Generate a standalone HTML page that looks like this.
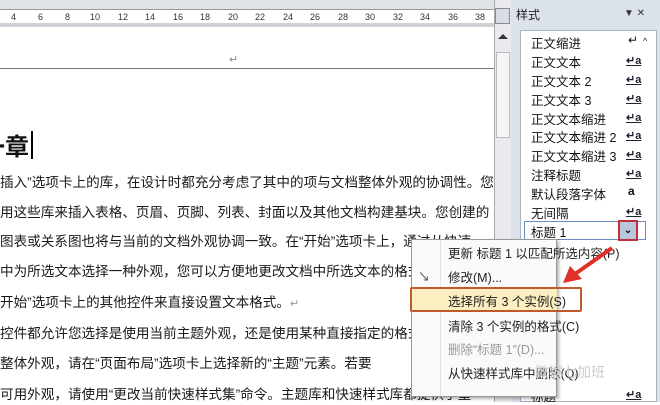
<!DOCTYPE html>
<html><head><meta charset="utf-8"><style>
*{margin:0;padding:0;box-sizing:border-box}
body{width:660px;height:402px;overflow:hidden;background:#fff;position:relative;font-family:"Liberation Sans","Noto Sans CJK SC",sans-serif;color:#111}
.abs{position:absolute}
.doc{left:0;top:0;width:494px;height:402px;overflow:hidden}
.ln{position:absolute;left:0;white-space:nowrap;font-size:13.6px;line-height:20px;color:#1a1a1a}
.rul{font-size:9px;color:#333;position:absolute;top:12px}
.it{position:absolute;left:531px;font-size:12.5px;white-space:nowrap;color:#111}
.ic{position:absolute;left:626px;font-size:11px;font-weight:bold;text-decoration:underline;color:#223}
.mi{position:absolute;left:448px;font-size:12.5px;white-space:nowrap;color:#222}
</style></head><body>
<div class="abs" style="left:0;top:0;width:510px;height:10px;background:#dfe3e8;border-bottom:1px solid #999"></div>
<div class="abs" style="left:0;top:10px;width:494px;height:17px;background:#fff;border-bottom:4px solid #cfd3d8"></div>
<div class="rul" style="left:11px">4</div><div class="rul" style="left:38px">6</div><div class="rul" style="left:65px">8</div><div class="rul" style="left:90px">10</div><div class="rul" style="left:118px">12</div><div class="rul" style="left:145px">14</div><div class="rul" style="left:173px">16</div><div class="rul" style="left:200px">18</div><div class="rul" style="left:228px">20</div><div class="rul" style="left:255px">22</div><div class="rul" style="left:283px">24</div><div class="rul" style="left:310px">26</div><div class="rul" style="left:338px">28</div><div class="rul" style="left:365px">30</div><div class="rul" style="left:393px">32</div><div class="rul" style="left:420px">34</div><div class="rul" style="left:448px">36</div><div class="rul" style="left:475px">38</div>
<div class="abs" style="left:0;top:68px;width:494px;height:1px;background:#777"></div>
<div class="abs" style="left:229px;top:53px;font-size:11px;color:#888">↵</div>
<div class="doc abs">
<div class="abs" style="left:-19px;top:130px;font-size:24px;font-weight:bold;font-family:'Noto Sans CJK SC',sans-serif;line-height:30px">一章</div>
<div class="abs" style="left:31px;top:131px;width:2px;height:28px;background:#000"></div>
<div class="ln" style="top:173px">插入”选项卡上的库，在设计时都充分考虑了其中的项与文档整体外观的协调性。您</div>
<div class="ln" style="top:203px">用这些库来插入表格、页眉、页脚、列表、封面以及其他文档构建基块。您创建的</div>
<div class="ln" style="top:232px">图表或关系图也将与当前的文档外观协调一致。在“开始”选项卡上，通过从快速</div>
<div class="ln" style="top:262px">中为所选文本选择一种外观，您可以方便地更改文档中所选文本的格式。</div>
<div class="ln" style="top:293px">开始”选项卡上的其他控件来直接设置文本格式。<span style="color:#999;font-size:11px">↵</span></div>
<div class="ln" style="top:324px">控件都允许您选择是使用当前主题外观，还是使用某种直接指定的格式。</div>
<div class="ln" style="top:354px">整体外观，请在“页面布局”选项卡上选择新的“主题”元素。若要</div>
<div class="ln" style="top:385px">可用外观，请使用“更改当前快速样式集”命令。主题库和快速样式库都提供了重</div>
</div>
<div class="abs" style="left:494px;top:0;width:17px;height:402px;background:#e8eaed;border-left:1px solid #aaa"></div>
<div class="abs" style="left:495px;top:8px;width:15px;height:16px;background:#d8dde4;border:1px solid #889"></div>
<div class="abs" style="left:498px;top:34px;width:0;height:0;border-left:5px solid transparent;border-right:5px solid transparent;border-bottom:5px solid #333"></div>
<div class="abs" style="left:496px;top:52px;width:14px;height:86px;background:#f4f5f7;border:1px solid #bbb"></div>
<div class="abs" style="left:511px;top:0;width:149px;height:402px;background:#dce2ea"></div>
<div class="abs" style="left:516px;top:6px;font-size:12px;color:#222">样式</div>
<div class="abs" style="left:624px;top:8px;font-size:10px;color:#333">▼ ✕</div>
<div class="abs" style="left:520px;top:30px;width:137px;height:372px;background:#fff;border:1px solid #a9b3c0"></div>
<div class="it" style="top:33px">正文缩进</div><div class="abs" style="left:628px;top:33px;font-size:12px">↵</div><div class="abs" style="left:643px;top:36px;font-size:9px">^</div>
<div class="it" style="top:52px">正文文本</div><div class="ic" style="top:54px">↵a</div>
<div class="it" style="top:71px">正文文本 2</div><div class="ic" style="top:73px">↵a</div>
<div class="it" style="top:90px">正文文本 3</div><div class="ic" style="top:92px">↵a</div>
<div class="it" style="top:109px">正文文本缩进</div><div class="ic" style="top:111px">↵a</div>
<div class="it" style="top:127px">正文文本缩进 2</div><div class="ic" style="top:129px">↵a</div>
<div class="it" style="top:146px">正文文本缩进 3</div><div class="ic" style="top:148px">↵a</div>
<div class="it" style="top:165px">注释标题</div><div class="ic" style="top:167px">↵a</div>
<div class="it" style="top:184px">默认段落字体</div><div class="abs" style="left:628px;top:184px;font-size:12px;font-weight:bold">a</div>
<div class="it" style="top:203px">无间隔</div><div class="ic" style="top:205px">↵a</div>
<div class="abs" style="left:524px;top:221px;width:122px;height:19px;border:1px solid #6b8cc0"></div>
<div class="it" style="top:222px">标题 1</div>
<div class="abs" style="left:618px;top:220px;width:20px;height:21px;border:2px solid #c0303a;background:#b9c7da;font-size:10px;text-align:center;line-height:17px;font-weight:bold">⌄</div>
<div class="it" style="top:386px">标题</div><div class="ic" style="top:388px">↵a</div>
<div class="abs" style="left:411px;top:239px;width:146px;height:158px;background:#fafafa;border:1px solid #999;box-shadow:2px 2px 3px rgba(0,0,0,.3)"></div>
<div class="abs" style="left:440px;top:240px;width:1px;height:156px;background:#e2e3e6"></div>
<div class="mi" style="top:243px">更新 标题 1 以匹配所选内容(P)</div>
<div class="abs" style="left:418px;top:268px;font-size:12px;color:#345">↘</div>
<div class="mi" style="top:267px">修改(M)...</div>
<div class="abs" style="left:411px;top:288px;width:146px;height:24px;background:#fbeec0"></div>
<div class="abs" style="left:410px;top:287px;width:172px;height:25px;border:2px solid #c05a2a;border-radius:2px"></div>
<div class="mi" style="top:291px">选择所有 3 个实例(S)</div>
<div class="mi" style="top:316px">清除 3 个实例的格式(C)</div>
<div class="mi" style="top:339px;color:#999">删除“标题 1”(D)...</div>
<div class="mi" style="top:363px">从快速样式库中删除(Q)</div>
<div class="abs" style="left:535px;top:362px;font-size:14px;color:#ccc">数据七加班</div>
<svg class="abs" style="left:0;top:0" width="660" height="402"><line x1="612" y1="248" x2="575" y2="274" stroke="#e0302a" stroke-width="4"/><polygon points="563,283 570,266 582,279" fill="#e0302a"/></svg>
</body></html>
